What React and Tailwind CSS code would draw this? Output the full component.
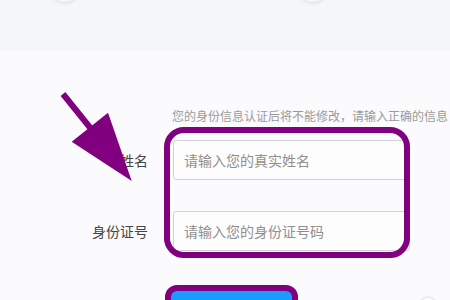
import React from "react";

const font = { fontFamily: '"Noto Sans CJK SC", "Noto Sans", sans-serif' };

const Row = ({ label, placeholder, className }) => (
  <div className={"flex items-center " + className}>
    <div className="w-[148px] text-right text-[14px] text-[#444]">{label}</div>
    <input
      className="ml-[25px] w-[237px] h-[40px] border border-[#d2d2d6] rounded-[3px] bg-[#fdfdfe] pl-[10px] text-[14px] outline-none placeholder:text-[#8f8f8f]"
      placeholder={placeholder}
    />
  </div>
);

const App = () => (
  <div className="w-[450px] h-[300px] overflow-hidden relative bg-[#fbfbfd]" style={font}>
    <div className="h-[50px] bg-[#f5f6fa] flex pl-[50px] gap-[218px] overflow-hidden">
      <div className="w-[30px] h-[30px] -mt-[28px] rounded-full bg-[#f5f6fa] shadow-[0_2px_3px_rgba(0,0,0,0.08)]"></div>
      <div className="w-[30px] h-[30px] -mt-[28px] rounded-full bg-[#f5f6fa] shadow-[0_2px_3px_rgba(0,0,0,0.08)]"></div>
    </div>

    <div className="pt-[59px]">
      <p className="pl-[172px] text-[12px] leading-[14px] text-[#9a9a9a] whitespace-nowrap">
        您的身份信息认证后将不能修改，请输入正确的信息
      </p>
      <Row label="姓名" placeholder="请输入您的真实姓名" className="mt-[17px]" />
      <Row label="身份证号" placeholder="请输入您的身份证号码" className="mt-[31px]" />
      <div className="flex items-start mt-[40px]">
        <button className="ml-[171px] w-[122px] h-[44px] pt-[8px] rounded-[4px] bg-[#1a9cff] text-white text-[15px]">
          下一步
        </button>
        <div className="ml-[125px] mt-[5px] w-[20px] h-[20px] rounded-full border-2 border-[#ececf0]"></div>
      </div>
    </div>

    {/* annotations */}
    <div className="absolute left-[164px] top-[127px] w-[246px] h-[131px] border-[6px] border-[#800080] rounded-[20px]"></div>
    <div className="absolute left-[165px] top-[285px] w-[133px] h-[40px] border-[6px] border-[#800080] rounded-[12px]"></div>
    <svg className="absolute left-0 top-0" width="450" height="300">
      <line x1="63" y1="94" x2="92" y2="130" stroke="#800080" strokeWidth="6" />
      <polygon points="71.7,141.7 108,112.7 131.7,181" fill="#800080" />
    </svg>
  </div>
);

export default App;
